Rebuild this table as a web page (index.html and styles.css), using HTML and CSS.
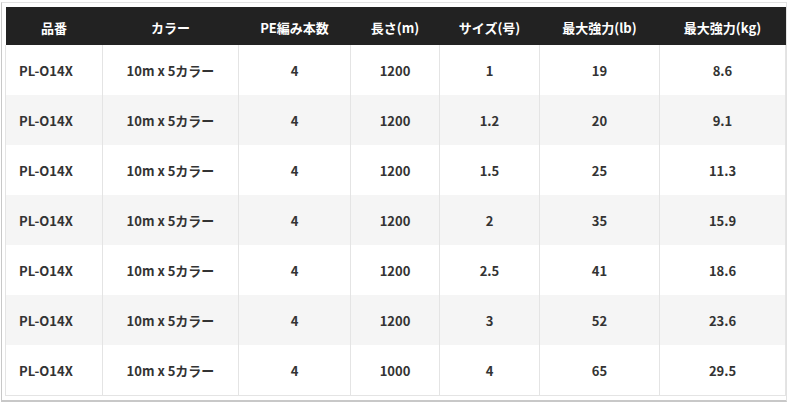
FILE: index.html
```html
<!DOCTYPE html>
<html lang="ja">
<head>
<meta charset="utf-8">
<link rel="stylesheet" href="styles.css">
</head>
<body>
<div class="frame">
  <table class="spec">
    <thead>
      <tr><th class="c1">品番</th><th class="c2">カラー</th><th class="c3">PE編み本数</th><th class="c4">長さ(m)</th><th class="c5">サイズ(号)</th><th class="c6">最大強力(lb)</th><th class="c7">最大強力(kg)</th></tr>
    </thead>
    <tbody>
      <tr><td>PL-O14X</td><td>10m x 5カラー</td><td>4</td><td>1200</td><td>1</td><td>19</td><td>8.6</td></tr>
      <tr><td>PL-O14X</td><td>10m x 5カラー</td><td>4</td><td>1200</td><td>1.2</td><td>20</td><td>9.1</td></tr>
      <tr><td>PL-O14X</td><td>10m x 5カラー</td><td>4</td><td>1200</td><td>1.5</td><td>25</td><td>11.3</td></tr>
      <tr><td>PL-O14X</td><td>10m x 5カラー</td><td>4</td><td>1200</td><td>2</td><td>35</td><td>15.9</td></tr>
      <tr><td>PL-O14X</td><td>10m x 5カラー</td><td>4</td><td>1200</td><td>2.5</td><td>41</td><td>18.6</td></tr>
      <tr><td>PL-O14X</td><td>10m x 5カラー</td><td>4</td><td>1200</td><td>3</td><td>52</td><td>23.6</td></tr>
      <tr><td>PL-O14X</td><td>10m x 5カラー</td><td>4</td><td>1000</td><td>4</td><td>65</td><td>29.5</td></tr>
    </tbody>
  </table>
</div>
</body>
</html>
```

FILE: styles.css
```css
html, body {
  margin: 0;
  padding: 0;
  background: #fff;
}
body {
  font-family: "Noto Sans CJK JP", "Noto Sans", sans-serif;
  color: #333;
}
.frame {
  width: 786px;
  height: 400px;
  margin: 2px 0 0 1px;
  box-sizing: border-box;
  border: 1px solid #e2e2e2;
  border-left-color: #c8c8c8;
  border-bottom: 2px solid #c8c8c8;
  padding: 4px 0 0 3px;
}
.spec {
  width: 780px;
  border-collapse: collapse;
  table-layout: fixed;
  font-size: 13px;
  font-weight: 700;
}
.c1 { width: 97px; }
.c2 { width: 136px; }
.c3 { width: 112px; }
.c4 { width: 89px; }
.c5 { width: 100px; }
.c6 { width: 120px; }
.c7 { width: 126px; }
.spec th {
  background: #222;
  color: #fff;
  height: 38px;
  padding: 2px 0 0;
  box-sizing: border-box;
  text-align: center;
  font-weight: 700;
  border: 0;
}
.spec td {
  height: 50px;
  padding: 0;
  text-align: center;
  border-left: 1px solid #e4e4e4;
  border-right: 1px solid #e4e4e4;
}
.spec td:first-child {
  text-align: left;
  text-indent: 13px;
}
.spec tbody tr:nth-child(even) td {
  background: #f5f5f5;
}
.spec tbody tr:last-child td {
  border-bottom: 1px solid #e4e4e4;
}
```
